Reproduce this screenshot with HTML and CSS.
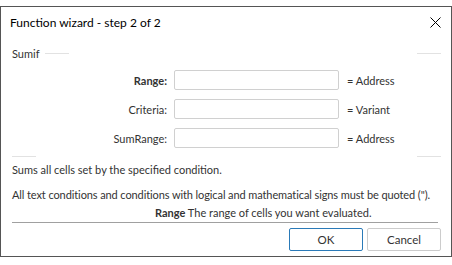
FILE: index.html
```html
<!DOCTYPE html>
<html lang="en">
	<head>
		<meta charset="UTF-8" />
		<title>Function wizard</title>
		<link rel="stylesheet" href="styles.css">
	</head>
	<body>
		<div class="dialog">
			<div class="titlebar">
				<h1>Function wizard - step 2 of 2</h1>
				<svg class="close" width="11" height="11" viewBox="0 0 11 11">
					<path d="M0.5 0.5 L10.5 10.5 M10.5 0.5 L0.5 10.5" stroke="rgb(0, 0, 0)" stroke-width="1" fill="none" />
				</svg>
			</div>
			<div class="group">
				<div class="group-head">
					<span>Sumif</span>
					<i class="line"></i>
					<i class="fill"></i>
					<i class="line"></i>
				</div>
				<div class="rows">
					<div class="row">
						<label class="bold">Range:</label>
						<input type="text" />
						<span>= Address</span>
					</div>
					<div class="row">
						<label>Criteria:</label>
						<input type="text" />
						<span>= Variant</span>
					</div>
					<div class="row">
						<label>SumRange:</label>
						<input type="text" />
						<span>= Address</span>
					</div>
				</div>
				<div class="group-foot">
					<i class="line"></i>
					<i class="fill"></i>
					<i class="line"></i>
				</div>
			</div>
			<div class="desc">
				<p class="first">Sums all cells set by the specified condition.</p>
				<p class="second">All text conditions and conditions with logical and mathematical signs must be quoted (").</p>
				<p class="arg"><b>Range</b> The range of cells you want evaluated.</p>
			</div>
			<div class="buttons">
				<button class="ok">OK</button>
				<button>Cancel</button>
			</div>
		</div>
	</body>
</html>
```

FILE: styles.css
```css
* {
	margin: 0;
	padding: 0;
	box-sizing: border-box;
}
body {
	background-color: rgb(255, 255, 255);
	font-family: "Lato", sans-serif;
	font-size: 11px;
	color: rgb(51, 51, 51);
	padding-top: 6px;
}
.dialog {
	width: 452px;
	height: 251px;
	border: 1px solid rgb(85, 85, 85);
	display: flex;
	flex-direction: column;
}
.titlebar {
	height: 30px;
	flex-shrink: 0;
	display: flex;
	align-items: center;
	padding: 0rem 10px 0rem 9px;
}
.titlebar > h1 {
	font-size: 12px;
	font-weight: 400;
	color: rgb(0, 0, 0);
}
.close {
	margin-left: auto;
}
.group {
	margin: 10px 10px 0px 11px;
}
.group-head,
.group-foot {
	display: flex;
	align-items: center;
	height: 12px;
}
.group-foot {
	height: 1px;
	margin-top: 8px;
}
.group-head > span {
	margin-right: 5px;
}
.line {
	width: 24px;
	height: 1px;
	background-color: rgb(226, 226, 226);
}
.fill {
	flex: 1;
}
.rows {
	margin-top: 11px;
	display: flex;
	flex-direction: column;
	gap: 9px;
}
.row {
	display: flex;
	align-items: center;
	height: 20px;
}
.row > label {
	width: 162px;
	text-align: right;
	padding-right: 7px;
}
.row > .bold {
	font-weight: 700;
}
.row > input {
	width: 165px;
	height: 20px;
	border: 1px solid rgb(208, 208, 208);
	border-radius: 2px;
}
.row > span {
	margin-left: 8px;
}
.desc {
	margin: 0px 13px 0px 11px;
	padding-top: 5px;
	border-bottom: 1px solid rgb(160, 160, 160);
}
.desc > p {
	line-height: 15px;
	white-space: nowrap;
}
.desc > .second {
	margin-top: 10px;
	letter-spacing: -0.1px;
}
.desc > .arg {
	margin-top: 3px;
	padding-left: 143px;
	padding-bottom: 2px;
}
.buttons {
	display: flex;
	justify-content: flex-end;
	gap: 4px;
	padding: 5px 10px 0px 0px;
}
.buttons > button {
	width: 74px;
	height: 23px;
	background-color: rgb(255, 255, 255);
	border: 1px solid rgb(204, 204, 204);
	border-radius: 2px;
	font-family: "Lato", sans-serif;
	font-size: 11.5px;
	color: rgb(51, 51, 51);
}
.buttons > .ok {
	border-color: rgb(42, 122, 184);
}
```
